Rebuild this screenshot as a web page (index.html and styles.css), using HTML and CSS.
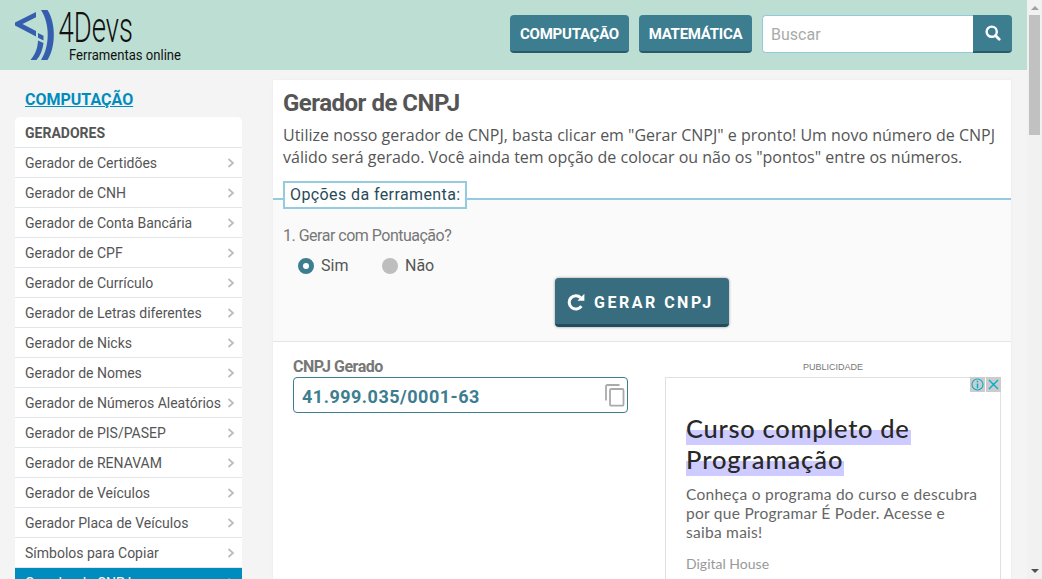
FILE: index.html
```html
<!DOCTYPE html>
<html lang="pt-BR">
<head>
<meta charset="utf-8">
<title>Gerador de CNPJ</title>
<link rel="stylesheet" href="styles.css">
</head>
<body>
<div class="page">
  <header class="topbar">
    <svg class="logo" width="185" height="70" viewBox="0 0 185 70" role="img" aria-label="4Devs Ferramentas online">
      <g fill="#355fae">
        <path d="M36 12v5.200L22.500 24 36 31v5.500L15 25.500v-3z"/>
        <path d="M38 33l5.500 2.800V40.500L38 37.800z"/>
        <path d="M38 40.500l5.500 2.500C42.500 50 40.500 55.500 36.500 60H30.500c5-6 7.200-12 7.500-19.500z"/>
        <path d="M41 10h6.500c8.500 13 8.500 37 0 50H41c9-14 9-36 0-50z"/>
      </g>
      <text class="logo-name" x="58.500" y="41.500" textLength="74.500" lengthAdjust="spacingAndGlyphs">4Devs</text>
      <text class="logo-sub" x="69" y="60" textLength="112" lengthAdjust="spacingAndGlyphs">Ferramentas online</text>
    </svg>
    <nav class="nav">
      <a class="nav-btn nav-comp">COMPUTAÇÃO</a>
      <a class="nav-btn nav-mat">MATEMÁTICA</a>
      <form class="search">
        <span class="search-field">Buscar</span>
        <span class="search-btn"><svg width="16" height="16" viewBox="0 0 16 16" fill="none" stroke="#fff"><circle cx="6.700" cy="6.700" r="5.100" stroke-width="2.400"/><path d="M10.500 10.500l3.700 3.700" stroke-width="2.800" stroke-linecap="round"/></svg></span>
      </form>
    </nav>
  </header>
  <div class="body">
    <aside class="side">
      <a class="side-title">COMPUTAÇÃO</a>
      <ul class="menu">
        <li class="menu-head">GERADORES</li>
        <li>Gerador de Certidões<svg class="chev" viewBox="0 0 8 10"><path d="M1.500 1l4.500 4-4.500 4"/></svg></li>
        <li>Gerador de CNH<svg class="chev" viewBox="0 0 8 10"><path d="M1.500 1l4.500 4-4.500 4"/></svg></li>
        <li>Gerador de Conta Bancária<svg class="chev" viewBox="0 0 8 10"><path d="M1.500 1l4.500 4-4.500 4"/></svg></li>
        <li>Gerador de CPF<svg class="chev" viewBox="0 0 8 10"><path d="M1.500 1l4.500 4-4.500 4"/></svg></li>
        <li>Gerador de Currículo<svg class="chev" viewBox="0 0 8 10"><path d="M1.500 1l4.500 4-4.500 4"/></svg></li>
        <li>Gerador de Letras diferentes<svg class="chev" viewBox="0 0 8 10"><path d="M1.500 1l4.500 4-4.500 4"/></svg></li>
        <li>Gerador de Nicks<svg class="chev" viewBox="0 0 8 10"><path d="M1.500 1l4.500 4-4.500 4"/></svg></li>
        <li>Gerador de Nomes<svg class="chev" viewBox="0 0 8 10"><path d="M1.500 1l4.500 4-4.500 4"/></svg></li>
        <li>Gerador de Números Aleatórios<svg class="chev" viewBox="0 0 8 10"><path d="M1.500 1l4.500 4-4.500 4"/></svg></li>
        <li>Gerador de PIS/PASEP<svg class="chev" viewBox="0 0 8 10"><path d="M1.500 1l4.500 4-4.500 4"/></svg></li>
        <li>Gerador de RENAVAM<svg class="chev" viewBox="0 0 8 10"><path d="M1.500 1l4.500 4-4.500 4"/></svg></li>
        <li>Gerador de Veículos<svg class="chev" viewBox="0 0 8 10"><path d="M1.500 1l4.500 4-4.500 4"/></svg></li>
        <li>Gerador Placa de Veículos<svg class="chev" viewBox="0 0 8 10"><path d="M1.500 1l4.500 4-4.500 4"/></svg></li>
        <li>Símbolos para Copiar<svg class="chev" viewBox="0 0 8 10"><path d="M1.500 1l4.500 4-4.500 4"/></svg></li>
        <li class="active">Gerador de CNPJ<svg class="chev" viewBox="0 0 8 10"><path d="M1.500 1l4.500 4-4.500 4"/></svg></li>
      </ul>
    </aside>
    <main class="card">
      <section class="intro">
        <h1>Gerador de CNPJ</h1>
        <p>Utilize nosso gerador de CNPJ, basta clicar em "Gerar CNPJ" e pronto! Um novo número de CNPJ<br>válido será gerado. Você ainda tem opção de colocar ou não os "pontos" entre os números.</p>
      </section>
      <section class="options">
        <div class="legend">Opções da ferramenta:</div>
        <div class="question">1. Gerar com Pontuação?</div>
        <div class="radios">
          <span class="radio on"></span><span class="radio-label">Sim</span>
          <span class="radio"></span><span class="radio-label">Não</span>
        </div>
        <button class="generate"><svg width="18" height="18" viewBox="0 0 18 18"><path d="M13.700 4.700A6.700 6.700 0 1 0 14.400 13.200" fill="none" stroke="#fff" stroke-width="3"/><path d="M17.400 .8v7h-7z" fill="#fff"/></svg><span>GERAR CNPJ</span></button>
      </section>
      <section class="result">
        <div class="output">
          <div class="output-label">CNPJ Gerado</div>
          <div class="output-box"><span>41.999.035/0001-63</span>
            <svg width="20" height="23" viewBox="0 0 20 23" fill="none" stroke="#aaa" stroke-width="1.800"><path d="M1 16.500V2.400Q1 1 2.400 1H14.500"/><rect x="5" y="5" width="13.500" height="16.700" rx="1.300"/></svg>
          </div>
        </div>
        <div class="ad">
          <div class="ad-label">PUBLICIDADE</div>
          <div class="ad-box">
            <div class="ad-icons">
              <svg width="15" height="15" viewBox="0 0 15 15"><path fill="#ccc" d="M0 0h15v15H0z"/><circle cx="7.500" cy="7.500" r="5.500" fill="none" stroke="#00aecd" stroke-width="1.100"/><path d="M7.500 6.400v4.800M7.500 3.700v1.600" stroke="#00aecd" stroke-width="1.500"/></svg>
              <svg width="15" height="15" viewBox="0 0 15 15"><path fill="#ccc" d="M0 0h15v15H0z"/><path d="M3 3l9 9M12 3l-9 9" stroke="#00aecd" stroke-width="1.400"/></svg>
            </div>
            <div class="ad-title"><span class="ad-line1">Curso completo de</span><span class="ad-line2">Programação</span></div>
            <div class="ad-text"><span class="t1">Conheça o programa do curso e descubra</span><br><span class="t2">por que Programar É Poder. Acesse e</span><br><span class="t3">saiba mais!</span></div>
            <div class="ad-brand">Digital House</div>
          </div>
        </div>
      </section>
    </main>
  </div>
</div>
<div class="scrollbar">
  <span class="arrow up"></span><span class="thumb"></span><span class="arrow down"></span>
</div>
</body>
</html>
```
FILE: styles.css
```css
* { box-sizing: border-box; }
body { margin: 0; width: 1042px; height: 579px; overflow: hidden; display: flex; background: #f4f4f4; color: #555; font-family: Roboto, sans-serif; }
.page { width: 1027px; height: 579px; overflow: hidden; }
.topbar { height: 70px; background: #bddfd3; display: flex; justify-content: space-between; }
.logo { display: block; }
.logo-name { font: 300 43px Roboto, sans-serif; fill: #111; }
.logo-sub { font: 400 15.500px Roboto, sans-serif; fill: #111; }
.nav { display: flex; padding: 15px 15px 0 0; gap: 10px; }
.nav-btn { height: 38px; border-radius: 4px; background: #3d7d90; border-bottom: 2px solid #285c6c; color: #fff; font-weight: 700; font-size: 15px; letter-spacing: -.25px; line-height: 38px; text-align: center; white-space: nowrap; }
.nav-comp { width: 119px; }
.nav-mat { width: 113px; }
.search { display: flex; width: 250px; height: 38px; }
.search-field { flex: 1; background: #fff; border: 1px solid #94c9dc; border-right: 0; border-radius: 4px 0 0 4px; padding-left: 8px; font-size: 16px; line-height: 37px; color: #aaa; }
.search-btn { width: 39px; background: #3d7d90; border-bottom: 2px solid #285c6c; border-radius: 0 4px 4px 0; display: flex; align-items: center; justify-content: center; }
.body { display: flex; padding-left: 15px; gap: 31px; align-items: flex-start; }
.side { width: 227px; padding-top: 18px; }
.side-title { display: block; padding-left: 10px; height: 29px; line-height: 24px; font-size: 16px; font-weight: 700; color: #008dbd; text-decoration: underline; }
.menu { list-style: none; margin: 0; padding: 0; background: #fff; border-radius: 5px 5px 0 0; font-size: 14px; }
.menu li { height: 30px; line-height: 30px; padding: 0 7px 0 10px; border-bottom: 1px solid #e2e4e5; display: flex; justify-content: space-between; align-items: center; white-space: nowrap; }
.menu .menu-head { height: 31px; font-weight: 700; padding-top: 1px; }
.menu .active { background: #008dbd; color: #fff; border: 0; }
.chev { width: 8px; height: 10px; fill: none; stroke: #bbb; stroke-width: 1.700; }
.active .chev { stroke: #fff; }
.card { width: 738px; margin-top: 10px; background: #fff; box-shadow: 0 0 2px rgba(0,0,0,.06); }
.intro { height: 118px; padding: 9px 0 0 10px; }
h1 { margin: 0; font-size: 24px; font-weight: 700; letter-spacing: -.5px; line-height: 28px; }
p { margin: 7px 0 0; font: 16px/22px "Open Sans", sans-serif; white-space: nowrap; }
.options { height: 144px; background: #fafafa; border-top: 2px solid #94cbdd; border-bottom: 1px solid #e5e5e5; padding-left: 10px; }
.legend { width: 184px; height: 28px; margin-top: -19px; background: #fff; border: 2px solid #94cbdd; padding-left: 5px; font-size: 16px; line-height: 23px; letter-spacing: .4px; color: #274b58; white-space: nowrap; }
.question { margin-top: 15px; line-height: 24px; font-size: 16px; letter-spacing: -.5px; color: #777; }
.radios { display: flex; align-items: center; height: 24px; margin: 6px 0 0 15px; font-size: 16px; }
.radio { width: 16px; height: 16px; border-radius: 50%; background: #bebebe; }
.radio.on { background: #fff; border: 5px solid #3d7d90; }
.radio-label { margin-left: 7px; width: 61px; line-height: 24px; }
.generate { display: flex; align-items: center; gap: 9px; width: 174px; height: 49px; margin: 0 0 0 272px; padding: 2px 0 0 12px; border: 0; border-bottom: 3px solid #214e5c; border-radius: 4px; background: #376d7e; box-shadow: 0 0 3px rgba(0,0,0,.4); color: #fff; font: 700 16px Roboto, sans-serif; letter-spacing: 2.500px; white-space: nowrap; }
.result { display: flex; padding: 14px 10px 0 20px; justify-content: space-between; }
.output { width: 335px; }
.output-label { height: 21px; line-height: 21px; font-size: 16px; font-weight: 700; letter-spacing: -.5px; color: #777; }
.output-box { height: 36px; border: 1px solid #3d7d90; border-radius: 4px; padding: 0 2px 0 8px; display: flex; align-items: center; justify-content: space-between; color: #3d7d90; font-size: 18px; font-weight: 700; letter-spacing: .5px; }
.output-box span { padding-top: 2px; }
.ad { width: 336px; }
.ad-label { height: 21px; padding-top: 1px; text-align: center; font: 9px/20px "Liberation Sans", sans-serif; color: #777; }
.ad-box { height: 280px; border: 1px solid #e0e0e0; font-family: Lato, sans-serif; padding-left: 20px; }
.ad-icons { display: flex; justify-content: flex-end; gap: 1px; height: 15px; margin: -1px -1px 0 0; }
.ad-title { display: flex; flex-direction: column; align-items: flex-start; margin-top: 22px; font-size: 25.500px; font-weight: 500; color: #282828; line-height: 29px; }
.ad-title span { height: 31px; white-space: nowrap; background: linear-gradient(#fff 0 16px, #cdcbff 16px); }
.ad-line1 { width: 225px; letter-spacing: .7px; }
.ad-line2 { width: 158px; letter-spacing: .95px; }
.ad-text { margin-top: 9px; font-size: 15.500px; line-height: 19px; color: #666; white-space: nowrap; }
.t1, .t2, .t3 { letter-spacing: .27px; }
.ad-brand { margin-top: 12px; font-size: 14px; line-height: 20px; color: #999; }
.scrollbar { width: 15px; height: 579px; background: #f1f1f1; display: flex; flex-direction: column; align-items: center; }
.arrow { border: 4px solid transparent; }
.up { border-top: 0; border-bottom-color: #a0a0a0; margin-top: 6px; }
.thumb { width: 11px; height: 120px; margin-top: 5px; background: #c1c1c1; }
.down { border-bottom: 0; border-top-color: #505050; margin-top: auto; margin-bottom: 6px; }
```
